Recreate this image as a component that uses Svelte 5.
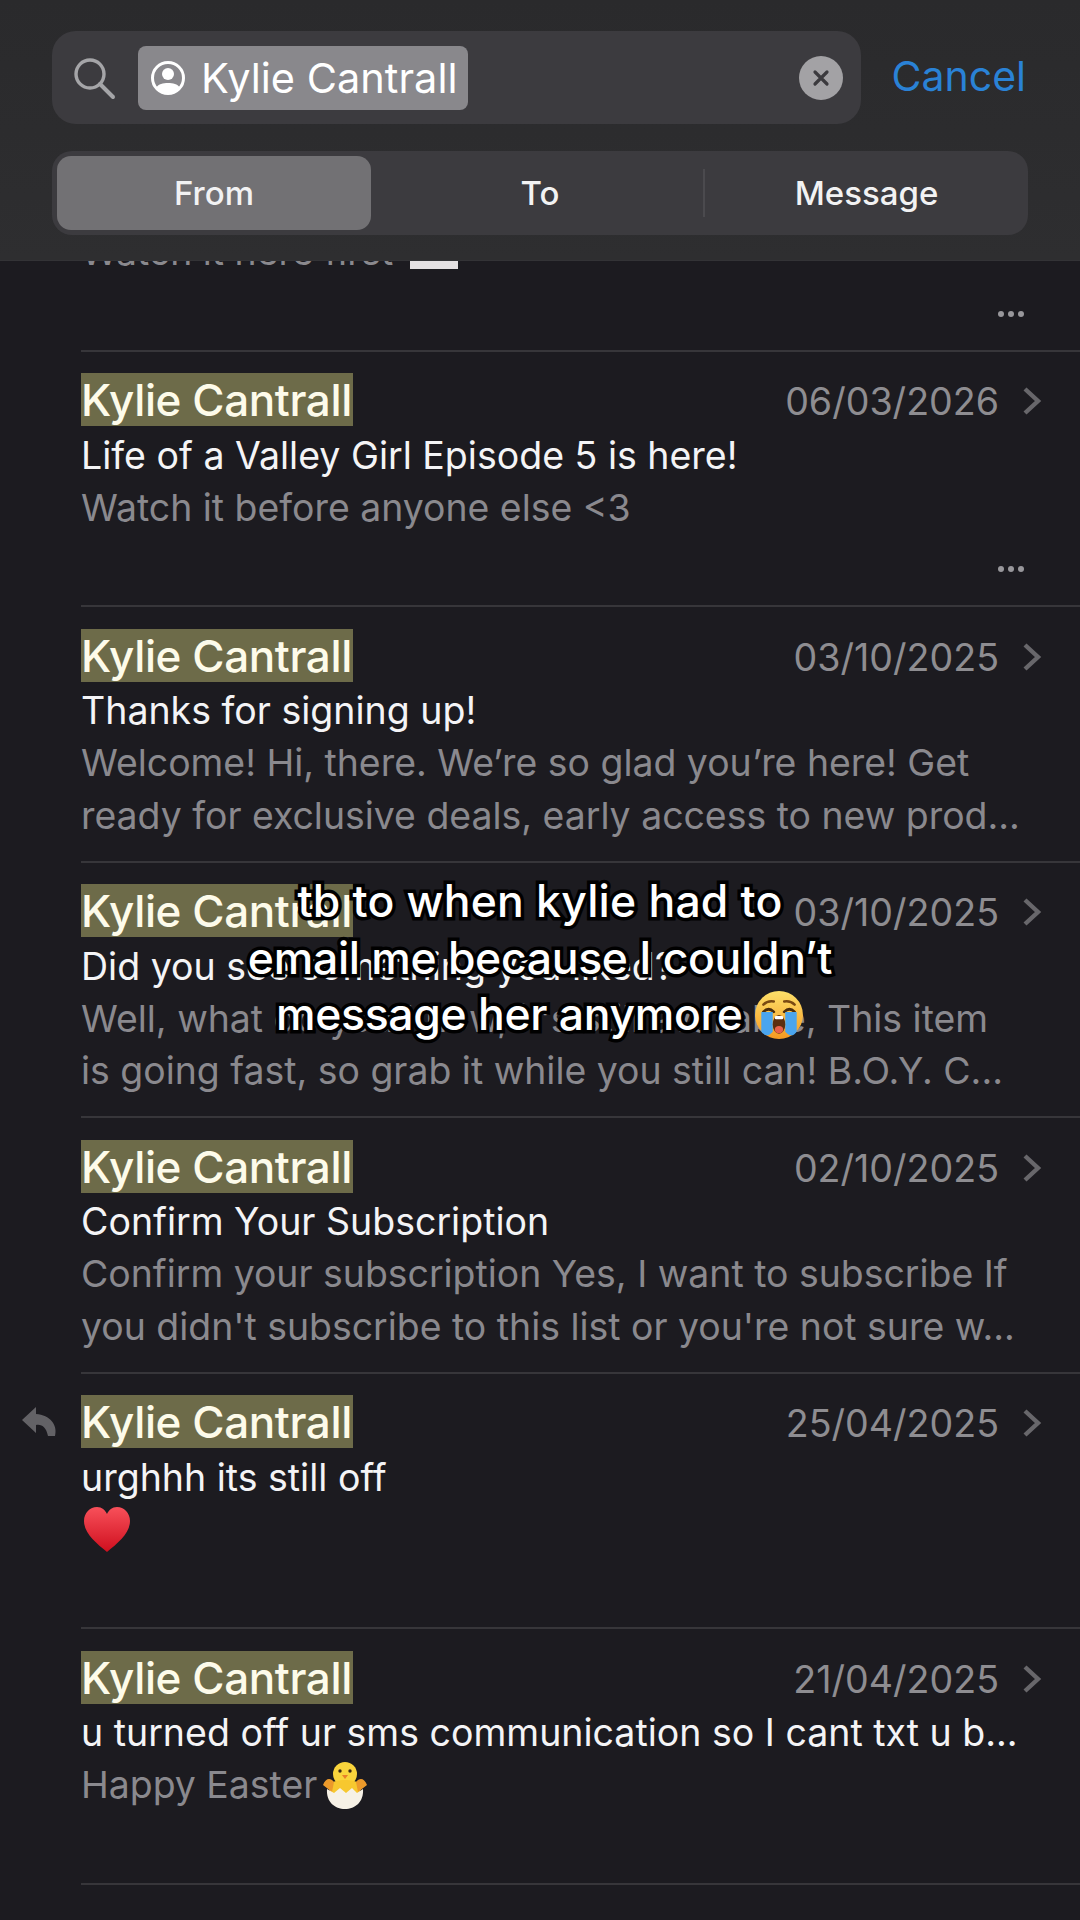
<script>
  const rows = [
    { first: true, preview: ["Watch it here first "], envelope: true, dots: true },
    { date: "06/03/2026", subject: "Life of a Valley Girl Episode 5 is here!", preview: ["Watch it before anyone else <3"], dots: true },
    { date: "03/10/2025", subject: "Thanks for signing up!", preview: ["Welcome! Hi, there. We’re so glad you’re here! Get", "ready for exclusive deals, early access to new prod..."] },
    { date: "03/10/2025", subject: "Did you see something you liked?", preview: ["Well, what do you know, it's still available, This item", "is going fast, so grab it while you still can! B.O.Y. C..."] },
    { date: "02/10/2025", subject: "Confirm Your Subscription", preview: ["Confirm your subscription Yes, I want to subscribe If", "you didn't subscribe to this list or you're not sure w..."] },
    { date: "25/04/2025", subject: "urghhh its still off", heart: true, replied: true },
    { date: "21/04/2025", subject: "u turned off ur sms communication so I cant txt u b...", preview: ["Happy Easter"], chick: true }
  ];
</script>

<main class="screen">
  <header class="top">
    <div class="search-row">
      <div class="search">
        <svg class="glass" viewBox="0 0 44 44" width="44" height="44">
          <circle cx="18" cy="18" r="14" fill="none" stroke="#a5a5a8" stroke-width="3.4" />
          <path d="M28 28 L41 41" stroke="#a5a5a8" stroke-width="4" stroke-linecap="round" />
        </svg>
        <div class="chip">
          <svg viewBox="0 0 36 36" width="36" height="36">
            <circle cx="18" cy="18" r="15.5" fill="none" stroke="#fff" stroke-width="3" />
            <circle cx="18" cy="14" r="6" fill="#fff" />
            <path d="M6.5 27 C10 21.5 26 21.5 29.5 27 C26 35 10 35 6.5 27 Z" fill="#fff" />
          </svg>
          <span>Kylie Cantrall</span>
        </div>
        <div class="clear">
          <svg viewBox="0 0 22 22" width="22" height="22">
            <path d="M5 5 L17 17 M17 5 L5 17" stroke="#3b3a3e" stroke-width="3.2" stroke-linecap="round" />
          </svg>
        </div>
      </div>
      <span class="cancel">Cancel</span>
    </div>
    <div class="segments">
      <div class="seg active">From</div>
      <div class="seg to">To</div>
      <div class="divider"></div>
      <div class="seg">Message</div>
    </div>
  </header>

  <section class="list">
    {#each rows as row}
      <article class="row" class:first={row.first}>
        {#if row.replied}
          <svg class="reply" viewBox="0 0 36 30" width="36" height="30">
            <path d="M14 0 L0 13 L14 26 L14 18 C20 17 24 20 26 29 L33 29 C36 18 28 8 14 7 Z" fill="#636266" />
          </svg>
        {/if}
        {#if !row.first}
          <div class="head">
            <span class="name">Kylie Cantrall</span>
            <span class="date">{row.date}</span>
            <svg class="chev" viewBox="0 0 20 30" width="20" height="30">
              <path d="M3 3 L16 15 L3 27" fill="none" stroke="#68676b" stroke-width="4.4" />
            </svg>
          </div>
          <div class="subject">{row.subject}</div>
        {/if}
        {#if row.heart}
          <svg class="heart" viewBox="0 0 46 46" width="46" height="46">
            <defs>
              <linearGradient id="hg" x1="0" y1="0" x2="0" y2="1">
                <stop offset="0" stop-color="#f8505a" />
                <stop offset="1" stop-color="#cf0f1e" />
              </linearGradient>
            </defs>
            <path d="M23 45 C12 36 0 26 0 14 C0 6 6 0 13 0 C18 0 21 3 23 7 C25 3 28 0 33 0 C40 0 46 6 46 14 C46 26 34 36 23 45 Z" fill="url(#hg)" />
          </svg>
        {/if}
        {#each row.preview ?? [] as line}
          <div class="preview">
            {line}{#if row.envelope}<span class="envelope"><i></i></span>{/if}{#if row.chick}<svg class="chick" viewBox="0 0 50 50" width="50" height="50">
                <circle cx="25" cy="14" r="12" fill="#f9d53c" />
                <path d="M8 26 C12 18 38 18 42 26 L38 36 L12 36 Z" fill="#f7c82f" />
                <path d="M3 25 C6 17 11 18 14 22 L12 32 Z M47 25 C44 17 39 18 36 22 L38 32 Z" fill="#ec9a2b" />
                <path d="M22 15 L28 15 L25 19 Z" fill="#e8802a" />
                <circle cx="20" cy="11" r="1.7" fill="#3c2a12" />
                <circle cx="30" cy="11" r="1.7" fill="#3c2a12" />
                <path d="M7 29 L14 33 L20 28 L26 33 L32 28 L37 33 L43 29 C44 42 35 49 25 49 C15 49 6 42 7 29 Z" fill="#f6f1e6" />
              </svg>{/if}
          </div>
        {/each}
        {#if row.dots}
          <div class="dots">
            <i></i><i></i><i></i>
          </div>
        {/if}
      </article>
    {/each}
  </section>

  <div class="caption">
    <div class="wide">tb to when kylie had to</div>
    <div>email me because I couldn’t</div>
    <div>message her anymore <svg class="cry" viewBox="0 0 48 48" width="50" height="50">
        <defs>
          <linearGradient id="cg" x1="0" y1="0" x2="0" y2="1">
            <stop offset="0" stop-color="#fde06a" />
            <stop offset="1" stop-color="#f59a22" />
          </linearGradient>
        </defs>
        <circle cx="24" cy="24" r="23" fill="url(#cg)" />
        <path d="M9 14 Q13 10 19 11 M39 14 Q35 10 29 11" fill="none" stroke="#7a4a12" stroke-width="2.4" stroke-linecap="round" />
        <path d="M9 21 Q14 16 19 21 M29 21 Q34 16 39 21" fill="none" stroke="#4a2d0c" stroke-width="2.6" stroke-linecap="round" />
        <path d="M7 21 H18 L18 40 Q12 47 7 40 Z M30 21 H41 L41 40 Q36 47 30 40 Z" fill="#4aa5ee" />
        <ellipse cx="24" cy="33" rx="6" ry="9" fill="#5c2f10" />
        <ellipse cx="24" cy="38" rx="4" ry="3.5" fill="#e8604a" />
        <rect x="20" y="25" width="8" height="3" rx="1.2" fill="#fff" />
      </svg></div>
  </div>
</main>

<style>
  :global(body) {
    margin: 0;
    background: #1c1b20;
  }

  .screen {
    position: relative;
    width: 1080px;
    height: 1920px;
    display: flex;
    flex-direction: column;
    overflow: hidden;
    background: #1c1b20;
    color: #fff;
    font-family: Inter, "Liberation Sans", sans-serif;
  }

  .top {
    flex: none;
    height: 261px;
    box-sizing: border-box;
    padding: 31px 52px 0;
    background: linear-gradient(#2a2a2c, #2e2e30);
    border-bottom: 1px solid #333336;
  }

  .search-row {
    display: flex;
    align-items: center;
    justify-content: space-between;
  }

  .search {
    width: 809px;
    height: 93px;
    box-sizing: border-box;
    padding: 0 18px 0 20px;
    display: flex;
    align-items: center;
    gap: 22px;
    background: #3c3b3f;
    border-radius: 24px;
  }

  .glass {
    flex: none;
  }

  .chip {
    height: 64px;
    width: 330px;
    box-sizing: border-box;
    padding: 0 10px 0 12px;
    display: flex;
    align-items: center;
    gap: 15px;
    background: #89888c;
    border-radius: 8px;
    font-size: 41.5px;
    white-space: nowrap;
  }

  .chip svg {
    flex: none;
  }

  .clear {
    margin-left: auto;
    width: 44px;
    height: 44px;
    border-radius: 50%;
    background: #a3a2a5;
    display: flex;
    align-items: center;
    justify-content: center;
  }

  .cancel {
    margin-right: 2px;
    margin-bottom: 4px;
    font-size: 41px;
    color: #2a82d6;
  }

  .segments {
    margin-top: 27px;
    width: 976px;
    height: 84px;
    box-sizing: border-box;
    padding: 5px 0 5px 5px;
    display: flex;
    align-items: center;
    background: #3c3b3f;
    border-radius: 20px;
  }

  .seg {
    flex: 1;
    height: 74px;
    display: flex;
    align-items: center;
    justify-content: center;
    font-size: 33px;
    font-weight: 500;
    color: #f2f2f3;
  }

  .seg.active {
    flex: none;
    width: 314px;
    background: #727174;
    border-radius: 14px;
  }

  .seg.to {
    flex: none;
    box-sizing: border-box;
    width: 332px;
    padding-left: 6px;
  }

  .divider {
    flex: none;
    width: 2px;
    height: 48px;
    background: #4b4a4e;
  }

  .list {
    flex: 1;
    overflow: hidden;
  }

  .row {
    position: relative;
    box-sizing: border-box;
    height: 255.5px;
    margin-left: 81px;
    padding-top: 21px;
    border-bottom: 2px solid #37363a;
  }

  .row.first {
    margin-top: -165px;
    padding-top: 135px;
  }

  .head {
    display: flex;
    align-items: center;
    height: 54px;
    padding-right: 38px;
  }

  .name {
    height: 53px;
    line-height: 55px;
    width: 272px;
    background: #6d6b49;
    color: #fdfbea;
    font-size: 44px;
    font-weight: 500;
    letter-spacing: -0.4px;
    white-space: nowrap;
    overflow: hidden;
  }

  .date {
    margin-left: auto;
    margin-top: 4px;
    font-size: 37.6px;
    color: #8e8d91;
  }

  .chev {
    margin-left: 23px;
    margin-top: 3px;
  }

  .subject {
    margin-top: 3px;
    height: 52px;
    line-height: 52px;
    font-size: 37.5px;
    color: #f4f4f6;
    white-space: nowrap;
  }

  .preview {
    height: 52.5px;
    line-height: 52px;
    font-size: 37.4px;
    color: #8a898e;
    white-space: nowrap;
  }

  .row.first .preview {
    height: 42px;
    line-height: 42px;
  }

  .envelope {
    position: relative;
    display: inline-block;
    width: 48px;
    height: 34px;
    margin-left: 6px;
    vertical-align: -4px;
    background: #e4e0e2;
  }

  .envelope i {
    position: absolute;
    left: 21px;
    top: 10px;
    width: 6px;
    height: 6px;
    border-radius: 50%;
    background: #a33a50;
  }

  .chick {
    margin-left: 3px;
    vertical-align: -12px;
  }

  .heart {
    display: block;
    margin: 3px 0 0 3px;
  }

  .reply {
    position: absolute;
    left: -59px;
    top: 33px;
  }

  .dots {
    position: absolute;
    right: 56px;
    bottom: 33px;
    display: flex;
    gap: 4px;
  }

  .dots i {
    width: 6px;
    height: 6px;
    border-radius: 50%;
    background: #98979b;
  }

  .caption {
    position: absolute;
    left: 0;
    right: 0;
    top: 873px;
    text-align: center;
    font-size: 44.5px;
    font-weight: 500;
    line-height: 56.5px;
    letter-spacing: -0.3px;
    color: #fff;
    -webkit-text-stroke: 7px #000;
    paint-order: stroke fill;
  }

  .caption .wide {
    letter-spacing: 0.2px;
  }

  .cry {
    vertical-align: -10px;
  }
</style>
